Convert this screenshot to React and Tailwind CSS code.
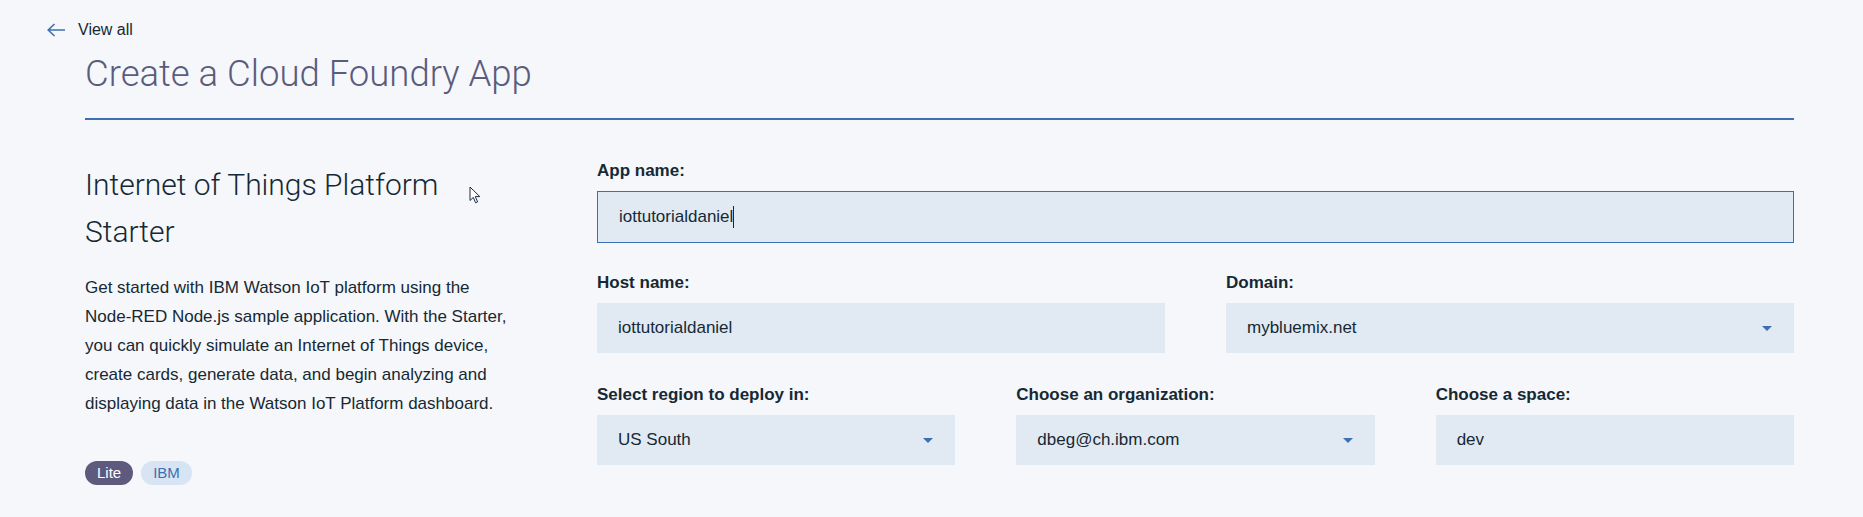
import React from 'react';

const boxBg = 'bg-[#e1e9f3]';

function Caret() {
  return (
    <svg width="10" height="5" viewBox="0 0 10 5" className="shrink-0">
      <polygon points="0,0 10,0 5,5" fill="#3d70b2" />
    </svg>
  );
}

function Label({ children }) {
  return <div className="text-[17px] leading-[20px] font-bold text-[#152935] mb-[10px]">{children}</div>;
}

function TextBox({ value }) {
  return (
    <div className={`${boxBg} h-[50px] flex items-center pl-[21px] text-[17px] text-[#152935]`}>{value}</div>
  );
}

function SelectBox({ value }) {
  return (
    <div className={`${boxBg} h-[50px] flex items-center justify-between pl-[21px] pr-[22px] text-[17px] text-[#152935]`}>
      <span>{value}</span>
      <Caret />
    </div>
  );
}

function Field({ label, children }) {
  return (
    <div>
      <Label>{label}</Label>
      {children}
    </div>
  );
}

export default function App() {
  return (
    <div className="min-h-screen bg-[#f5f7fa] text-[#152935] font-['Liberation_Sans',Arial,sans-serif]">
      {/* back link */}
      <div className="pt-[20px] pl-[47px] flex items-center gap-[13px] h-[40px]">
        <svg width="18" height="14" viewBox="0 0 18 14" fill="none" stroke="#3d70b2" strokeWidth="1.6">
          <path d="M7.5 1 L1.2 7 L7.5 13 M1.2 7 H18" />
        </svg>
        <span className="text-[16px] leading-[20px] text-[#152935]">View all</span>
      </div>

      <div className="pl-[85px] pr-[69px]">
        <h1 className="mt-[12px] text-[36.5px] leading-[44px] font-light text-[#5a5c7e] font-['Roboto','Liberation_Sans',sans-serif]">
          Create a Cloud Foundry App
        </h1>
        <div className="mt-[22px] h-[2px] bg-[#3d70b2]" />

        <div className="mt-[41px] flex">
          {/* left: starter description */}
          <div className="w-[512px] shrink-0 relative">
            <h2 className="max-w-[440px] text-[30px] leading-[47px] font-light text-[#152935] font-['Roboto','Liberation_Sans',sans-serif]">
              Internet of Things Platform Starter
            </h2>
            <svg width="12" height="18" viewBox="0 0 12 18" className="absolute left-[384px] top-[25px]">
              <path d="M1 1 L1 14.5 L4.3 11.4 L6.6 16.8 L8.6 15.9 L6.3 10.6 L10.8 10.6 Z" fill="#ffffff" stroke="#1e2a44" strokeWidth="1" strokeLinejoin="round" />
            </svg>
            <p className="mt-[18px] w-[432px] text-[17px] leading-[29px] text-[#152935]">
              {'Get started with IBM Watson IoT platform using the Node-\u2060RED Node.js sample application. With the Starter, you can quickly simulate an Internet of Things device, create cards, generate data, and begin analyzing and displaying data in the Watson IoT Platform dashboard.'}
            </p>
            <div className="mt-[43px] flex gap-[8px]">
              <span className="h-[24px] px-[12px] rounded-full bg-[#5e5a7e] text-white text-[15px] leading-[24px]">Lite</span>
              <span className="h-[24px] px-[12px] rounded-full bg-[#d6e4f3] text-[#3d70b2] text-[15px] leading-[24px]">IBM</span>
            </div>
          </div>

          {/* right: form */}
          <div className="flex-1 flex flex-col">
            <Field label="App name:">
              <div className={`${boxBg} h-[52px] border border-[#3d70b2] flex items-center pl-[21px] text-[17px] text-[#152935]`}>
                <span>iottutorialdaniel</span>
                <span className="w-[1px] h-[22px] bg-[#152935]" />
              </div>
            </Field>

            <div className="mt-[30px] grid grid-cols-2 gap-x-[61px]">
              <Field label="Host name:">
                <TextBox value="iottutorialdaniel" />
              </Field>
              <Field label="Domain:">
                <SelectBox value="mybluemix.net" />
              </Field>
            </div>

            <div className="mt-[32px] grid grid-cols-3 gap-x-[61px]">
              <Field label="Select region to deploy in:">
                <SelectBox value="US South" />
              </Field>
              <Field label="Choose an organization:">
                <SelectBox value="dbeg@ch.ibm.com" />
              </Field>
              <Field label="Choose a space:">
                <TextBox value="dev" />
              </Field>
            </div>
          </div>
        </div>
      </div>
    </div>
  );
}
